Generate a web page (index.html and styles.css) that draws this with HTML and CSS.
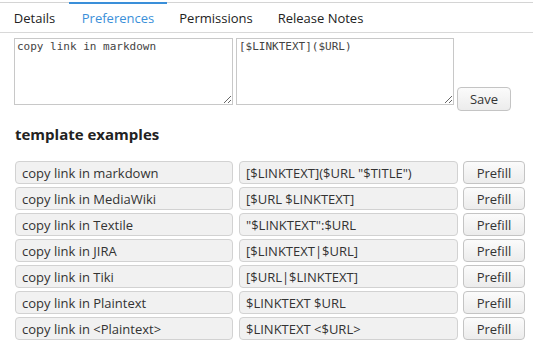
FILE: index.html
```html
<!DOCTYPE html>
<html lang="en">
<head>
    <meta charset="UTF-8">
    <title>Preferences</title>
    <link rel="stylesheet" href="styles.css">
</head>
<body>
    <div class="tabs">
        <span class="tab tab-details">Details</span>
        <span class="tab active">Preferences</span>
        <span class="tab">Permissions</span>
        <span class="tab tab-notes">Release Notes</span>
    </div>

    <div class="editor">
        <textarea class="tpl-area">copy link in markdown</textarea>
        <textarea class="tpl-area">[$LINKTEXT]($URL)</textarea>
        <button class="btn save">Save</button>
    </div>

    <h3 class="heading">template examples</h3>

    <div class="examples">
        <div class="row">
            <input class="field" value="copy link in markdown" readonly>
            <input class="field" value='[$LINKTEXT]($URL "$TITLE")' readonly>
            <button class="btn prefill">Prefill</button>
        </div>
        <div class="row">
            <input class="field" value="copy link in MediaWiki" readonly>
            <input class="field" value="[$URL $LINKTEXT]" readonly>
            <button class="btn prefill">Prefill</button>
        </div>
        <div class="row">
            <input class="field" value="copy link in Textile" readonly>
            <input class="field" value='"$LINKTEXT":$URL' readonly>
            <button class="btn prefill">Prefill</button>
        </div>
        <div class="row">
            <input class="field" value="copy link in JIRA" readonly>
            <input class="field" value="[$LINKTEXT|$URL]" readonly>
            <button class="btn prefill">Prefill</button>
        </div>
        <div class="row">
            <input class="field" value="copy link in Tiki" readonly>
            <input class="field" value="[$URL|$LINKTEXT]" readonly>
            <button class="btn prefill">Prefill</button>
        </div>
        <div class="row">
            <input class="field" value="copy link in Plaintext" readonly>
            <input class="field" value="$LINKTEXT $URL" readonly>
            <button class="btn prefill">Prefill</button>
        </div>
        <div class="row">
            <input class="field" value="copy link in &lt;Plaintext&gt;" readonly>
            <input class="field" value="$LINKTEXT &lt;$URL&gt;" readonly>
            <button class="btn prefill">Prefill</button>
        </div>
    </div>
</body>
</html>
```

FILE: styles.css
```css
body {
    margin: 0;
    padding-top: 2px;
    font-family: "Open Sans", "Noto Sans", sans-serif;
    font-size: 13px;
    color: #333;
    background-color: #fff;
}

/* tab bar */
.tabs {
    display: flex;
    border-top: 1px solid #d4d4d4;
    border-bottom: 1px solid #d8d8d8;
    height: 29px;
}

.tab {
    box-sizing: border-box;
    width: 98px;
    padding-top: 5px;
    margin-top: -1px;
    border-top: 2px solid transparent;
    font-size: 13px;
    color: #222;
    text-align: center;
    white-space: nowrap;
}

.tab-details {
    width: 69px;
}

.tab-notes {
    width: 111px;
}

.tab.active {
    color: #3a8fd9;
    border-top-color: #3a8fd9;
}

/* textareas */
.editor {
    display: flex;
    align-items: flex-end;
    padding: 5px 0 0 14px;
}

.tpl-area {
    box-sizing: border-box;
    width: 219px;
    height: 67px;
    margin: 0 3px 0 0;
    padding: 1px 2px;
    border: 1px solid #c8c8c8;
    font-family: "DejaVu Sans Mono", monospace;
    font-size: 11px;
    color: #444;
    resize: both;
}

.tpl-area + .tpl-area {
    width: 218px;
}

.btn {
    box-sizing: border-box;
    font-family: "Open Sans", "Noto Sans", sans-serif;
    font-size: 13px;
    color: #333;
    border: 1px solid #c4c4c4;
    border-radius: 4px;
    background: linear-gradient(#fbfbfb, #ececec);
    padding: 0;
}

.save {
    width: 54px;
    height: 24px;
    margin: 0 0 -6px 0;
}

.heading {
    margin: 19px 0 0 15px;
    font-size: 15px;
    font-weight: bold;
    color: #222;
}

/* example rows */
.examples {
    display: flex;
    flex-direction: column;
    gap: 3px;
    padding: 17px 0 0 15px;
}

.row {
    display: flex;
    gap: 6px;
}

.field {
    box-sizing: border-box;
    width: 218px;
    height: 23px;
    margin: 0;
    padding: 0 6px;
    border: 1px solid #d2d2d2;
    border-radius: 4px;
    background-color: #f1f1f1;
    font-family: "Open Sans", "Noto Sans", sans-serif;
    font-size: 13px;
    color: #333;
}

.field + .field {
    width: 219px;
}

.prefill {
    width: 62px;
    height: 23px;
    margin-left: -1px;
}
```
